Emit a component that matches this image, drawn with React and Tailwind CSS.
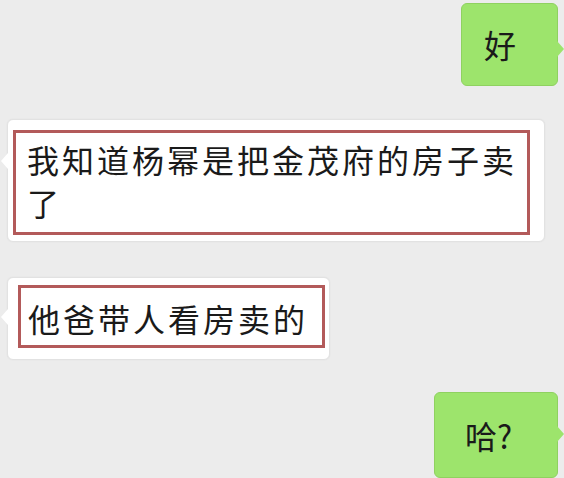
const FONT = { fontFamily: '"Noto Sans CJK SC", "Noto Sans", sans-serif' };

// green bubble with tail pointing right
const MineBubble = ({ children, className, tailTop }) => (
  <div className={`relative self-end mr-[6px] rounded-[6px] bg-[#9de46c] border border-[#8fd160] flex items-center text-[32px] leading-[43px] text-[#1a1a1a] ${className}`}>
    {children}
    <span className={`absolute right-[-7px] ${tailTop} w-0 h-0 border-y-[8px] border-y-transparent border-l-[7px] border-l-[#9de46c]`} />
  </div>
);

// white bubble with tail pointing left
const TheirBubble = ({ children, className, tailTop }) => (
  <div className={`relative self-start ml-[7px] rounded-[6px] bg-white border border-[#e2e2e2] shadow-[0_0_2px_rgba(0,0,0,0.06)] ${className}`}>
    <span className={`absolute left-[-7px] ${tailTop} w-0 h-0 border-y-[8px] border-y-transparent border-r-[7px] border-r-white`} />
    {children}
  </div>
);

export default function App() {
  return (
    <div className="w-[564px] h-[478px] overflow-hidden bg-[#ececec] flex flex-col pt-[3px]" style={FONT}>
      <MineBubble className="w-[97px] h-[85px] pl-[22px]" tailTop="top-[37px]">
        好
      </MineBubble>

      <TheirBubble className="mt-[33px] w-[538px] h-[126px] pt-[10px] pl-[5px]" tailTop="top-[33px]">
        <div className="w-[517px] border-[3px] border-[#b35a5a] pt-[5px] pb-[8px] pl-[11px] pr-[10px] text-[32px] leading-[43px] tracking-[3px] text-[#1a1a1a]">
          我知道杨幂是把金茂府的房子卖了
        </div>
      </TheirBubble>

      <TheirBubble className="mt-[35px] w-[323px] h-[85px] pt-[7px] pl-[10px]" tailTop="top-[31px]">
        <div className="w-[307px] border-[3px] border-[#b35a5a] pt-[9px] pb-[5px] pl-[7px] text-[32px] leading-[43px] tracking-[3px] text-[#1a1a1a] whitespace-nowrap">
          他爸带人看房卖的
        </div>
      </TheirBubble>

      <MineBubble className="mt-[32px] w-[124px] h-[86px] pl-[30px] shrink-0" tailTop="top-[33px]">
        哈?
      </MineBubble>
    </div>
  );
}
